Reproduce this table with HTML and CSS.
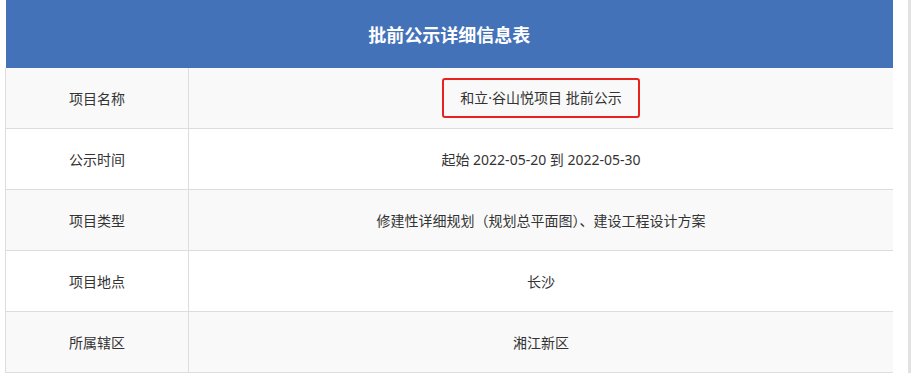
FILE: index.html
```html
<!DOCTYPE html>
<html lang="zh-CN">
<head>
  <meta charset="UTF-8">
  <meta name="viewport" content="width=device-width, initial-scale=1.0">
  <title>批前公示详细信息表</title>
  <link rel="stylesheet" href="styles.css">
</head>
<body>

  <div class="page">
    <table class="info-table">
      <colgroup>
        <col class="col-label">
        <col>
      </colgroup>
      <thead>
        <tr>
          <th colspan="2">批前公示详细信息表</th>
        </tr>
      </thead>
      <tbody>
        <tr>
          <td>项目名称</td>
          <td><span class="mark">和立·谷山悦项目 批前公示</span></td>
        </tr>
        <tr>
          <td>公示时间</td>
          <td>起始 2022-05-20 到 2022-05-30</td>
        </tr>
        <tr>
          <td>项目类型</td>
          <td>修建性详细规划（规划总平面图）、建设工程设计方案</td>
        </tr>
        <tr>
          <td>项目地点</td>
          <td>长沙</td>
        </tr>
        <tr>
          <td>所属辖区</td>
          <td>湘江新区</td>
        </tr>
      </tbody>
    </table>
    <div class="scroll-track"></div>
  </div>

</body>
</html>
```

FILE: styles.css
```css
/* Reset default styles */
* {
  margin: 0;
  padding: 0;
  box-sizing: border-box;
}

body {
  font-family: "Noto Sans", "Noto Sans CJK SC", sans-serif;
  font-size: 14px;
  color: #333;
  background: #fff;
}

/* Page wrapper */
.page {
  display: flex;
  height: 373px;
  overflow: hidden;
  padding-left: 5px;
}

/* Info table */
.info-table {
  width: 888px;
  border-collapse: collapse;
  table-layout: fixed;
  align-self: flex-start;
}

.info-table .col-label {
  width: 183px;
}

.info-table th {
  height: 68px;
  background: #4472b9;
  color: #fff;
  font-size: 18px;
  font-weight: bold;
  text-align: center;
}

.info-table td {
  height: 61px;
  text-align: center;
  border-left: 1px solid #ddd;
  border-bottom: 1px solid #ddd;
}

.info-table tbody tr:first-child td {
  height: 60px;
}

.info-table tbody tr:nth-child(odd) {
  background: #f9f9f9;
}

/* Red highlight round the project name */
.mark {
  display: inline-block;
  padding: 9px 16px;
  border: 2px solid #e8231f;
  border-radius: 3px;
  line-height: 18px;
}

/* Scrollbar strip on the right */
.scroll-track {
  width: 3px;
  margin-left: auto;
  background: #e2e2e2;
}
```
